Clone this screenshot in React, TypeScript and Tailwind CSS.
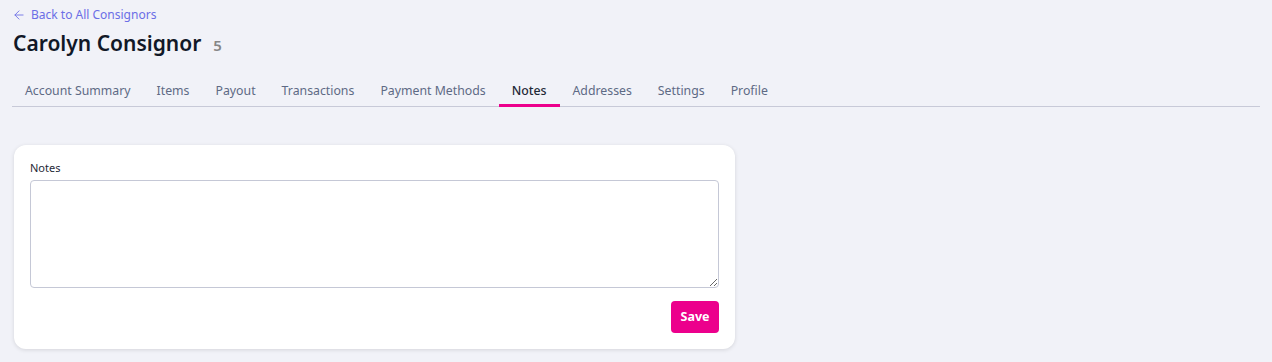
import { ArrowLeft } from 'lucide-react';

const TABS = ['Account Summary', 'Items', 'Payout', 'Transactions', 'Payment Methods', 'Notes', 'Addresses', 'Settings', 'Profile'];

export default function App() {
  const active = 'Notes';

  return (
    <div className="min-h-screen bg-[#f1f2f8] px-3 pt-[6px] font-['Noto_Sans',sans-serif]">
      <a href="#" className="flex items-center gap-[5px] text-[12px] text-[#6b6ee6] leading-[18px]">
        <ArrowLeft size={14} strokeWidth={1.5} />
        Back to All Consignors
      </a>

      <div className="mt-[5px] flex items-baseline gap-3 pl-[1px]">
        <h1 className="text-[21px] font-semibold text-[#111827] leading-[28px]">Carolyn Consignor</h1>
        <span className="text-[15px] font-semibold text-[#868686]">5</span>
      </div>

      <nav className="mt-[25px] flex border-b border-[#c8cad8]">
        {TABS.map((t) => (
          <button
            key={t}
            className={
              'px-[13px] pb-[4px] text-[12.3px] leading-[18px] border-b-[3px] -mb-px ' +
              (t === active
                ? 'border-[#ec008c] text-[#1f2937] font-medium'
                : 'border-transparent text-[#5e6a85]')
            }
          >
            {t}
          </button>
        ))}
      </nav>

      <div className="mt-[38px] ml-[2px] w-[721px] rounded-xl bg-white px-4 pt-[15px] pb-4 shadow-[0_1px_4px_rgba(0,0,0,0.12)]">
        <label className="block text-[11px] text-[#1f2937] leading-[16px]">Notes</label>
        <textarea className="mt-[4px] block h-[108px] w-full rounded border border-[#c5c8d6] bg-white" />
        <div className="mt-[13px] flex justify-end">
          <button className="h-[32px] w-[48px] rounded bg-[#ec008c] text-[12.5px] font-bold text-white">Save</button>
        </div>
      </div>
    </div>
  );
}
